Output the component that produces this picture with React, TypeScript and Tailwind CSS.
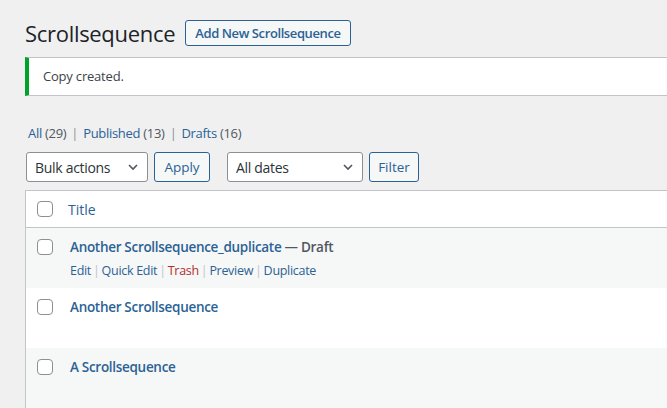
const font = { fontFamily: '"Open Sans", "Noto Sans", sans-serif' };

const Checkbox = () => (
  <span className="block w-4 h-4 shrink-0 border border-[#8c8f94] rounded-[4px] bg-white" />
);

const Chevron = () => (
  <svg width="16" height="16" viewBox="0 0 16 16" fill="none" stroke="#50575e" strokeWidth="1.6">
    <path d="M4 6l4 4 4-4" />
  </svg>
);

const Sep = () => <span className="text-[#c3c4c7] px-[2px]">|</span>;

type Row = { title: string; draft?: boolean; actions?: boolean };

const rows: Row[] = [
  { title: "Another Scrollsequence_duplicate", draft: true, actions: true },
  { title: "Another Scrollsequence" },
  { title: "A Scrollsequence" },
];

export default function App() {
  return (
    <div className="w-[667px] h-[408px] overflow-hidden bg-[#f0f0f1] text-[13px] text-[#3c434a]" style={font}>
      <div className="w-[720px] pl-[25px]">
        <div className="flex items-center h-[26px] mt-[20px]">
          <h1 className="text-[22px] leading-none text-[#1d2327] tracking-[-0.3px]">Scrollsequence</h1>
          <button className="ml-[10px] h-[26px] px-[9px] border border-[#2b6295] rounded-[3px] bg-[#f6f7f7] text-[#2b6295] font-semibold text-[13px] tracking-[-0.4px] leading-none">
            Add New Scrollsequence
          </button>
        </div>

        <div className="mt-[11px] h-[39px] flex items-center bg-white border border-[#c3c4c7] border-l-4 border-l-[#00a32a] pl-[14px] text-[#3c434a] tracking-[-0.2px]">
          Copy created.
        </div>

        <div className="mt-[28px] h-[20px] flex items-center pl-[3px] text-[#50575e] tracking-[-0.3px]">
          <span className="text-[#2b6295]">All</span>&nbsp;(29)
          <span className="px-[5px] text-[#8c8f94]">|</span>
          <span className="text-[#2b6295]">Published</span>&nbsp;(13)
          <span className="px-[5px] text-[#8c8f94]">|</span>
          <span className="text-[#2b6295]">Drafts</span>&nbsp;(16)
        </div>

        <div className="mt-[8px] flex items-center h-[30px]">
          <div className="ml-[1px] w-[122px] h-[30px] flex items-center justify-between pl-[8px] pr-[6px] bg-white border border-[#8c8f94] rounded-[3px] text-[14px] text-[#2c3338] tracking-[-0.3px]">
            Bulk actions
            <Chevron />
          </div>
          <button className="ml-[6px] w-[56px] h-[30px] border border-[#2b6295] rounded-[3px] bg-[#f6f7f7] text-[#2b6295] text-[13.5px]">
            Apply
          </button>
          <div className="ml-[17px] w-[136px] h-[30px] flex items-center justify-between pl-[8px] pr-[6px] bg-white border border-[#8c8f94] rounded-[3px] text-[14px] text-[#2c3338] tracking-[-0.3px]">
            All dates
            <Chevron />
          </div>
          <button className="ml-[6px] w-[50px] h-[30px] border border-[#2b6295] rounded-[3px] bg-[#f6f7f7] text-[#2b6295] text-[13.5px]">
            Filter
          </button>
        </div>

        <div className="mt-[8px] border border-[#c3c4c7] bg-white">
          <div className="h-[37px] flex items-center border-b border-[#c3c4c7] pl-[11px]">
            <Checkbox />
            <span className="ml-[15px] text-[14px] text-[#2b6295]">Title</span>
          </div>
          {rows.map((r, i) => (
            <div key={r.title} className={`h-[60px] flex items-start pl-[11px] pt-[10px] ${i % 2 === 0 ? "bg-[#f6f7f7]" : "bg-white"}`}>
              <div className="mt-[1px]">
                <Checkbox />
              </div>
              <div className="ml-[17px]">
                <div className="text-[13.5px] font-semibold leading-[18px] tracking-[-0.3px]">
                  <span className="text-[#2b6295]">{r.title}</span>
                  {r.draft && <span className="text-[#50575e]"> — Draft</span>}
                </div>
                {r.actions && (
                  <div className="mt-[6px] leading-[18px] text-[#2b6295] text-[12.5px] tracking-[-0.3px]">
                    Edit<Sep />Quick Edit<Sep />
                    <span className="text-[#b32d2e]">Trash</span>
                    <Sep />Preview<Sep />Duplicate
                  </div>
                )}
              </div>
            </div>
          ))}
        </div>
      </div>
    </div>
  );
}
